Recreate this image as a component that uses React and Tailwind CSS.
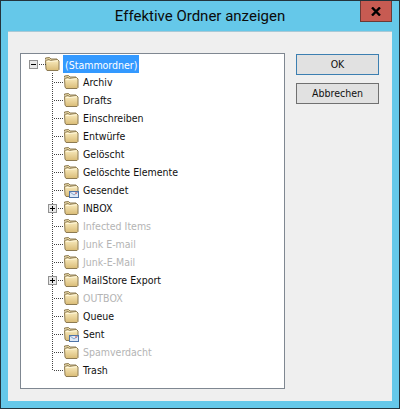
const items = [
  { t: "Archiv" }, { t: "Drafts" }, { t: "Einschreiben" }, { t: "Entwürfe" }, { t: "Gelöscht" },
  { t: "Gelöschte Elemente" }, { t: "Gesendet", mail: true }, { t: "INBOX", plus: true },
  { t: "Infected Items", dim: true }, { t: "Junk E-mail", dim: true }, { t: "Junk-E-Mail", dim: true },
  { t: "MailStore Export", plus: true }, { t: "OUTBOX", dim: true }, { t: "Queue" },
  { t: "Sent", mail: true }, { t: "Spamverdacht", dim: true }, { t: "Trash", last: true },
];

function Folder({ mail }) {
  return (
    <svg width="16" height="16" viewBox="0 0 16 16" className="shrink-0 ml-[-1px]">
      <defs>
        <linearGradient id="fg" x1="0" y1="0" x2="0" y2="1">
          <stop offset="0" stopColor="#fbeec2" />
          <stop offset="1" stopColor="#d9bb76" />
        </linearGradient>
      </defs>
      <path d="M1.5 3.5 L1.5 2 L5.5 1.5 L7 3 L13 3 L13.5 5" fill="#e6d5a0" stroke="#8c7a52" />
      <path d="M1.5 4.5 L2 13 L3 14.5 L14 14.5 L15 13.5 L15 5 L13.5 3.5 L6.5 4.5 L5 3.5 Z" fill="url(#fg)" stroke="#8c7a52" />
      <path d="M3 5.5 L6 5.5 L13.5 4.8" fill="none" stroke="#fff6d8" />
      {mail && (
        <g>
          <rect x="6.5" y="9.5" width="9" height="6" fill="#dfe9f6" stroke="#4f74a8" />
          <path d="M7 10 L11 13 L15 10" fill="none" stroke="#88a6cc" />
          <rect x="12" y="10.5" width="2" height="1" fill="#d9574e" />
        </g>
      )}
    </svg>
  );
}

function Expander({ open, className }) {
  return (
    <span className={"absolute w-[9px] h-[9px] border border-[#919191] bg-[#e8e8e8] flex items-center justify-center " + className}>
      <span className="relative w-[5px] h-[1px] bg-black">
        {!open && <span className="absolute left-[2px] top-[-2px] w-[1px] h-[5px] bg-black" />}
      </span>
    </span>
  );
}

function Row({ item }) {
  return (
    <div className="relative flex items-center h-[18px]">
      <svg width="12" height="18" className="shrink-0" shapeRendering="crispEdges">
        <path d={item.last ? "M0.5 0V9" : "M0.5 0V18"} stroke="#444" strokeDasharray="1 1" fill="none" />
        <path d="M2 9.5H12" stroke="#444" strokeDasharray="1 1" fill="none" />
      </svg>
      {item.plus && <Expander className="left-[-4px] top-[5px]" />}
      <Folder mail={item.mail} />
      <span className={"ml-[4px] pt-[2px] whitespace-nowrap " + (item.dim ? "text-[#b4b4b4]" : "text-[#101010]")}>{item.t}</span>
    </div>
  );
}

export default function App() {
  return (
    <div className="w-[400px] h-[409px] overflow-hidden bg-[#65c8e9] border border-[#23343c] flex flex-col" style={{ fontFamily: "'DejaVu Sans Condensed','Liberation Sans',sans-serif" }}>
      <div className="relative h-[30px] shrink-0 flex items-center justify-center text-[15px] text-[#0b0b0b]">
        <span className="whitespace-nowrap" style={{ fontFamily: "Roboto,sans-serif" }}>Effektive Ordner anzeigen</span>
        <div className="absolute right-[7px] top-0 w-[32px] h-[21px] bg-[#c75b52] border border-[#6b3a36] border-t-0 flex items-center justify-center">
          <svg width="10" height="9" viewBox="0 0 10 9"><path d="M1 0.5 L9 8.5 M9 0.5 L1 8.5" stroke="#000" strokeWidth="2.4" /></svg>
        </div>
      </div>
      <div className="mx-[7px] mb-[7px] flex-1 bg-[#efefef] border-t border-[#a9c9d6] flex items-start pl-[12px] pt-[21px] pr-[13px]">
        <div className="w-[265px] h-[336px] bg-white border border-[#7f8791] pl-[8px] pt-[1px] text-[10.5px]">
          <div className="relative flex items-center h-[18px] pl-[16px]">
            <Expander open className="left-0 top-[5px]" />
            <svg width="8" height="18" className="absolute left-[9px] top-0" shapeRendering="crispEdges">
              <path d="M1 9.5H8" stroke="#444" strokeDasharray="1 1" fill="none" />
            </svg>
            <Folder />
            <span className="ml-[3px] h-[18px] px-[2px] bg-[#3399ff] text-white leading-[20px] whitespace-nowrap">(Stammordner)</span>
          </div>
          <div className="pl-[23px]">
            {items.map((it) => <Row key={it.t} item={it} />)}
          </div>
        </div>
        <div className="ml-[11px] mt-[1px] flex flex-col gap-[8px] text-[10.5px] text-[#101010]">
          <button className="w-[83px] h-[21px] pt-[1px] bg-[#e1e1e1] border border-[#3c7fb1] flex items-center justify-center">OK</button>
          <button className="w-[83px] h-[21px] pt-[1px] bg-[#e1e1e1] border border-[#707070] flex items-center justify-center">Abbrechen</button>
        </div>
      </div>
    </div>
  );
}
